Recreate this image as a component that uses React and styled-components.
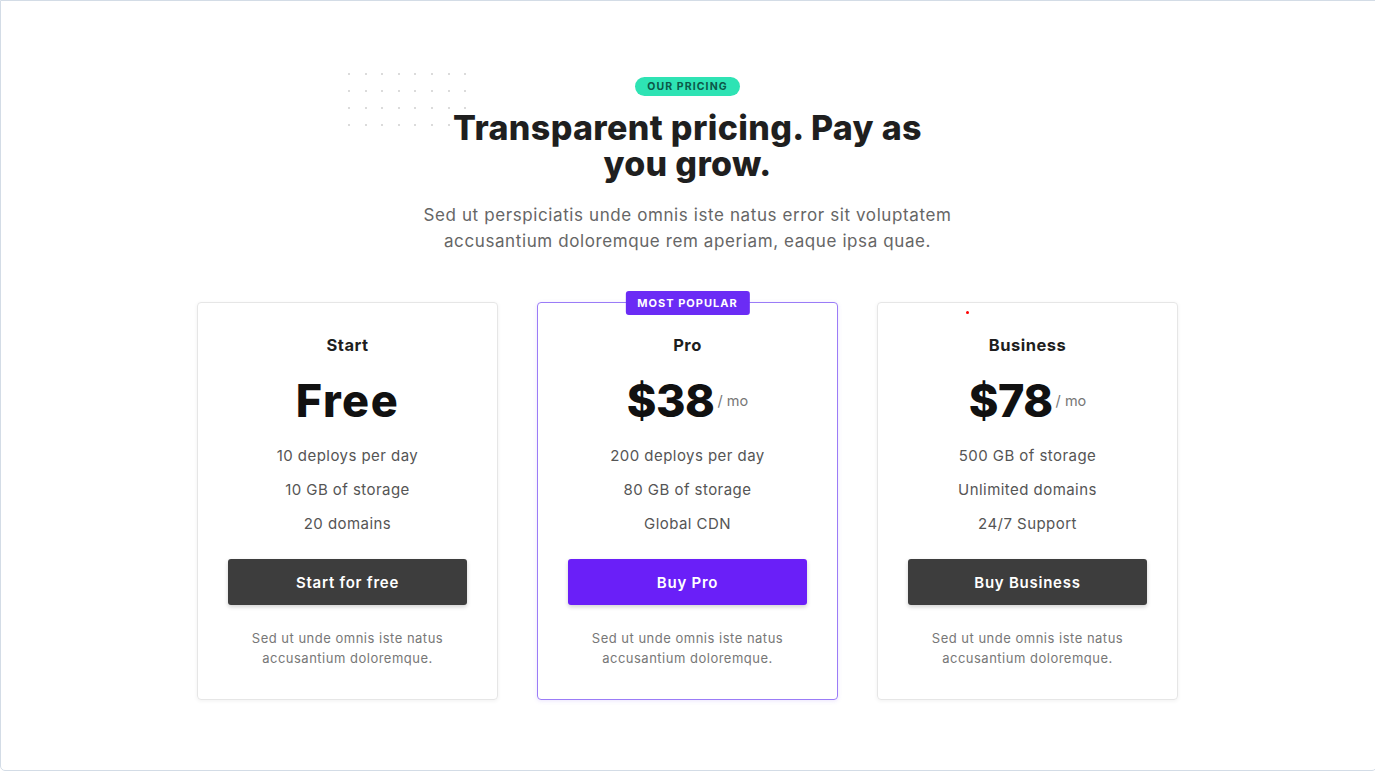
import React from "react";
import styled, { createGlobalStyle } from "styled-components";

const GlobalStyle = createGlobalStyle`
    html, body {
        margin: 0;
        padding: 0;
        background: #ffffff;
    }
    body {
        font-family: Inter, "Open Sans", "DejaVu Sans", sans-serif;
        -webkit-font-smoothing: antialiased;
    }
`;

const Frame = styled.div`
    box-sizing: border-box;
    width: 1377px;
    height: 771px;
    border: 1px solid #d3dce6;
    border-radius: 0 0 5px 5px;
    background: #fff;
    overflow: hidden;
    position: relative;
`;

const Section = styled.section`
    display: flex;
    flex-direction: column;
    align-items: center;
    padding: 76px 2px 0 0;
    position: relative;
`;

const DotGrid = styled.div`
    position: absolute;
    left: 347px;
    top: 72px;
    display: grid;
    grid-template-columns: repeat(8, 2px);
    grid-auto-rows: 2px;
    column-gap: 14.6px;
    row-gap: 15px;
`;

const Dot = styled.span`
    width: 2px;
    height: 2px;
    border-radius: 50%;
    background: #cfcfcf;
`;

const Eyebrow = styled.span`
    display: inline-block;
    background: #2ee3b4;
    color: #0c5848;
    font-size: 10.5px;
    font-weight: 700;
    letter-spacing: 1.1px;
    line-height: 19px;
    padding: 0 12px;
    border-radius: 10px;
    position: relative;
`;

const Title = styled.h1`
    margin: 14px 0 0;
    width: 520px;
    text-align: center;
    font-size: 34px;
    line-height: 36px;
    font-weight: 800;
    color: #1f1f1f;
    letter-spacing: 0.35px;
    position: relative;
`;

const Subtitle = styled.p`
    margin: 20px 0 0;
    width: 600px;
    text-align: center;
    font-size: 17px;
    line-height: 26px;
    letter-spacing: 0.6px;
    color: #666;
`;

const CardRow = styled.div`
    display: grid;
    grid-template-columns: repeat(3, 301px);
    gap: 39px;
    margin-top: 48px;
`;

const Card = styled.div`
    box-sizing: border-box;
    height: 398px;
    border: 1px solid ${p => (p.$featured ? "#9b7cf7" : "#e6e6e6")};
    border-radius: 4px;
    box-shadow: ${p => (p.$featured ? "0 1px 4px rgba(120, 80, 240, 0.15)" : "0 1px 4px rgba(0, 0, 0, 0.06)")};
    display: flex;
    flex-direction: column;
    align-items: center;
    padding: 31px 20px 0;
    position: relative;
`;

const PopularTag = styled.span`
    position: absolute;
    top: -12px;
    left: 50%;
    transform: translateX(-50%);
    background: #6b2cf5;
    color: #fff;
    font-size: 11px;
    font-weight: 700;
    letter-spacing: 1px;
    line-height: 24px;
    padding: 0 12px;
    border-radius: 3px;
    white-space: nowrap;
`;

const PlanName = styled.h3`
    margin: 0;
    font-size: 16.5px;
    line-height: 22px;
    font-weight: 700;
    letter-spacing: 0.5px;
    color: #1e1e1e;
`;

const PriceRow = styled.div`
    display: flex;
    align-items: baseline;
    margin-top: 14px;
    height: 62px;
`;

const Price = styled.span`
    font-size: 45px;
    line-height: 62px;
    font-weight: 800;
    color: #111;
    letter-spacing: ${p => (p.$word ? "1.5px" : "-0.5px")};
`;

const Period = styled.span`
    font-size: 14.5px;
    color: #777;
    margin-left: 3px;
    position: relative;
    top: -11px;
`;

const Features = styled.ul`
    list-style: none;
    margin: 13px 0 0;
    padding: 0;
    display: flex;
    flex-direction: column;
    gap: 12px;
    text-align: center;
`;

const Feature = styled.li`
    font-size: 15px;
    line-height: 22px;
    letter-spacing: 0.45px;
    color: #555;
`;

const ActionButton = styled.button`
    margin-top: 24px;
    width: 239px;
    height: 46px;
    border: none;
    border-radius: 3px;
    background: ${p => (p.$primary ? "#6a1ff8" : "#3d3d3d")};
    color: #fff;
    font-family: inherit;
    font-size: 15px;
    font-weight: 600;
    letter-spacing: 0.75px;
    box-shadow: 0 2px 4px rgba(0, 0, 0, 0.18);
    cursor: pointer;
`;

const Note = styled.p`
    margin: 23px 0 0;
    width: 240px;
    text-align: center;
    font-size: 13px;
    line-height: 20px;
    letter-spacing: 0.5px;
    color: #777;
`;

const StrayDot = styled.span`
    position: absolute;
    left: 965px;
    top: 310px;
    width: 3px;
    height: 3px;
    border-radius: 50%;
    background: #f00;
`;

const plans = [
    {
        name: "Start",
        price: "Free",
        features: ["10 deploys per day", "10 GB of storage", "20 domains"],
        cta: "Start for free",
    },
    {
        name: "Pro",
        price: "$38",
        period: true,
        featured: true,
        features: ["200 deploys per day", "80 GB of storage", "Global CDN"],
        cta: "Buy Pro",
    },
    {
        name: "Business",
        price: "$78",
        period: true,
        features: ["500 GB of storage", "Unlimited domains", "24/7 Support"],
        cta: "Buy Business",
    },
];

const App = () => {
    return (
        <Frame>
            <GlobalStyle />
            <Section>
                <DotGrid>
                    {Array.from({ length: 32 }).map((_, i) => (
                        <Dot key={i} />
                    ))}
                </DotGrid>
                <Eyebrow>OUR PRICING</Eyebrow>
                <Title>Transparent pricing. Pay as you grow.</Title>
                <Subtitle>
                    Sed ut perspiciatis unde omnis iste natus error sit voluptatem accusantium doloremque rem aperiam, eaque ipsa quae.
                </Subtitle>

                <CardRow>
                    {plans.map(plan => (
                        <Card key={plan.name} $featured={plan.featured}>
                            {plan.featured && <PopularTag>MOST POPULAR</PopularTag>}
                            <PlanName>{plan.name}</PlanName>
                            <PriceRow>
                                <Price $word={!plan.period}>{plan.price}</Price>
                                {plan.period && <Period>/ mo</Period>}
                            </PriceRow>
                            <Features>
                                {plan.features.map(f => (
                                    <Feature key={f}>{f}</Feature>
                                ))}
                            </Features>
                            <ActionButton $primary={plan.featured}>{plan.cta}</ActionButton>
                            <Note>Sed ut unde omnis iste natus accusantium doloremque.</Note>
                        </Card>
                    ))}
                </CardRow>
            </Section>
            <StrayDot />
        </Frame>
    );
};

export default App;
